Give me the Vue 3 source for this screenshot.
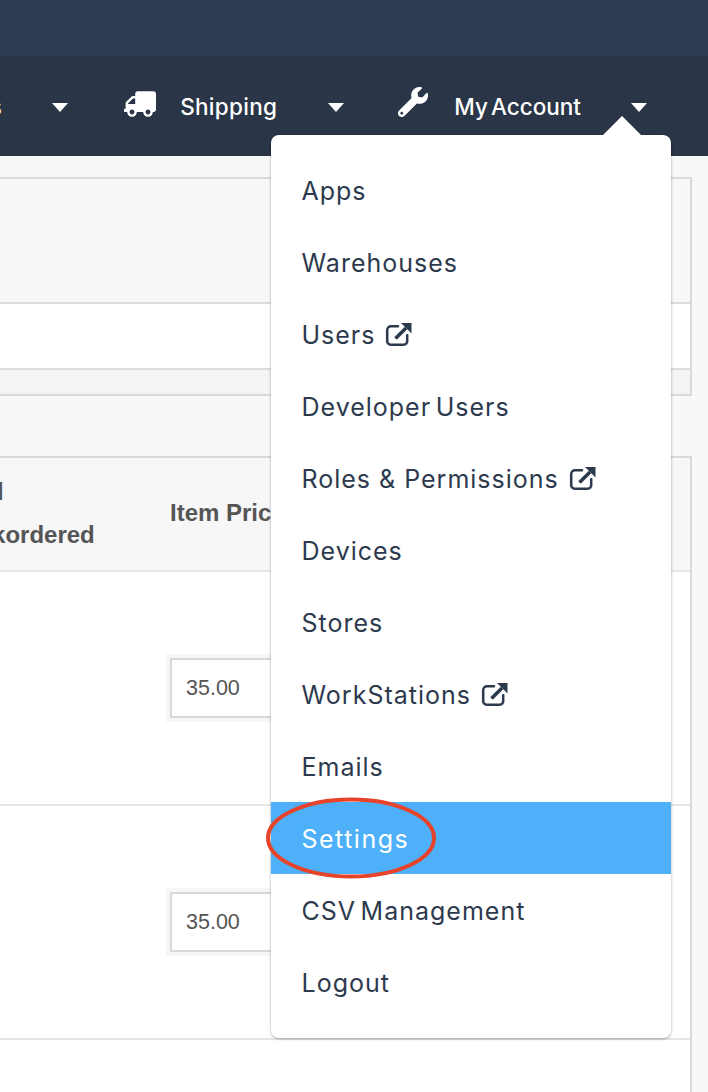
<script setup>
const items = [
  { label: 'Apps' },
  { label: 'Warehouses' },
  { label: 'Users', ext: true },
  { label: 'Developer Users' },
  { label: 'Roles & Permissions', ext: true, loose: true },
  { label: 'Devices' },
  { label: 'Stores' },
  { label: 'WorkStations', ext: true },
  { label: 'Emails' },
  { label: 'Settings', active: true },
  { label: 'CSV Management' },
  { label: 'Logout' }
]
const rows = ['35.00', '35.00']
</script>

<template>
  <div class="page">
    <header class="topbar">
      <nav class="nav">
        <a class="nav-item first"><span class="nav-label">Products</span><i class="caret"></i></a>
        <a class="nav-item ship">
          <svg class="truck" viewBox="0 0 640 512"><path transform="matrix(-1 0 0 1 640 0)" fill="#fff" d="M624 352h-16V243.9c0-12.7-5.1-24.9-14.1-33.9L494 110.1c-9-9-21.2-14.1-33.9-14.1H416V48c0-26.5-21.5-48-48-48H48C21.5 0 0 21.5 0 48v320c0 26.5 21.5 48 48 48h16c0 53 43 96 96 96s96-43 96-96h128c0 53 43 96 96 96s96-43 96-96h48c8.8 0 16-7.2 16-16v-32c0-8.8-7.2-16-16-16zM160 464c-26.5 0-48-21.5-48-48s21.5-48 48-48 48 21.5 48 48-21.5 48-48 48zm320 0c-26.5 0-48-21.5-48-48s21.5-48 48-48 48 21.5 48 48-21.5 48-48 48zm80-208H416V144h44.1l99.9 99.9V256z"/></svg>
          <span class="nav-label">Shipping</span><i class="caret"></i>
        </a>
        <a class="nav-item acct">
          <svg class="wrench" viewBox="0 0 512 512"><path fill="#fff" d="M507.73 109.1c-2.24-9.03-13.54-12.09-20.12-5.51l-74.36 74.36-67.88-11.31-11.31-67.88 74.36-74.36c6.62-6.62 3.43-17.9-5.66-20.16-47.38-11.74-99.55.91-136.58 37.93-39.64 39.64-50.55 97.1-34.05 147.2L18.74 402.76c-24.99 24.99-24.99 65.51 0 90.5 24.99 24.99 65.51 24.99 90.5 0l213.21-213.21c50.12 16.71 107.47 5.68 147.37-34.22 37.07-37.07 49.7-89.32 37.91-136.73zM64 472c-13.25 0-24-10.75-24-24 0-13.26 10.75-24 24-24s24 10.74 24 24c0 13.25-10.75 24-24 24z"/></svg>
          <span class="nav-label">My Account</span><i class="caret"></i>
        </a>
      </nav>
    </header>

    <main class="content">
      <section class="panel top-panel">
        <div class="panel-head"></div>
        <div class="panel-body"></div>
        <div class="panel-foot"></div>
      </section>

      <section class="panel table-panel">
        <div class="thead">
          <div class="th th-qty">Total<br />Backordered</div>
          <div class="th th-price">Item Price</div>
        </div>
        <div v-for="(price, i) in rows" :key="i" class="row">
          <div class="cell-qty"></div>
          <div class="cell-price"><span class="price-input">{{ price }}</span></div>
        </div>
        <div class="row"></div>
      </section>
    </main>

    <div class="menu">
      <i class="menu-arrow"></i>
      <a v-for="item in items" :key="item.label" class="menu-item" :class="{ active: item.active, loose: item.loose }">
        <span>{{ item.label }}</span>
        <svg v-if="item.ext" class="ext" viewBox="0 0 27 24">
          <path d="M13 4.300H6a3.800 3.800 0 0 0-3.800 3.800v11.100a3.500 3.500 0 0 0 3.500 3.500h13a3.500 3.500 0 0 0 3.500-3.500v-6" fill="none" stroke="#2d3a4e" stroke-width="2.500" stroke-linecap="round"/>
          <path d="M10.500 16.500L21 6" fill="none" stroke="#2d3a4e" stroke-width="3.600"/>
          <path d="M16 1H26.500V11.500Z" fill="#2d3a4e"/>
        </svg>
      </a>
      <svg class="circle" viewBox="0 0 172 84"><ellipse cx="85" cy="42" rx="83" ry="38.500" fill="none" stroke="#e6432a" stroke-width="4"/></svg>
    </div>
  </div>
</template>

<style scoped>
.page {
  position: relative;
  width: 708px;
  height: 1092px;
  overflow: hidden;
  background: #f8f8f8;
  font-family: Inter, "Liberation Sans", sans-serif;
}
.topbar {
  height: 156px;
  background: linear-gradient(#2f3b50 0, #2e3a4f 55px, #2a3547 57px);
  overflow: hidden;
}
.nav {
  height: 100%;
  box-sizing: border-box;
  padding: 88px 61px 0 0;
  display: flex;
  justify-content: flex-end;
  align-items: flex-start;
  color: #fff;
}
.nav-item {
  display: flex;
  align-items: center;
  height: 36px;
  flex: none;
}
.nav-label {
  font-size: 22.500px;
  font-weight: 500;
  letter-spacing: 0.3px;
  white-space: nowrap;
}
.acct .nav-label {
  letter-spacing: 0;
  word-spacing: -3px;
}
.caret {
  width: 0;
  height: 0;
  border-left: 8.500px solid transparent;
  border-right: 8.500px solid transparent;
  border-top: 9px solid #fff;
  margin-top: 3px;
}
.first .caret { margin-left: 50px; }
.ship { margin-left: 56px; }
.ship .caret { margin-left: 51px; }
.acct { margin-left: 54px; }
.acct .caret { margin-left: 50px; }
.truck { width: 32px; height: 26px; margin-right: 24px; margin-top: -4px; }
.wrench { width: 30px; height: 30px; margin-right: 26px; margin-top: -8px; }

.content {
  padding: 21px 16px 0 0;
}
.panel {
  margin-left: -60px;
  border: 2px solid #d9d9d9;
  background: #fff;
}
.top-panel { height: 215px; display: flex; flex-direction: column; }
.panel-head { height: 123px; background: #f8f8f8; border-bottom: 2px solid #dcdcdc; }
.panel-body { height: 64px; background: #fff; border-bottom: 2px solid #dcdcdc; }
.panel-foot { flex: 1; background: #f4f4f4; }
.table-panel { margin-top: 60px; }
.thead {
  height: 114px;
  box-sizing: border-box;
  padding-bottom: 3px;
  background: #f7f7f7;
  border-bottom: 2px solid #e5e5e5;
  display: flex;
  align-items: center;
  font-family: "Liberation Sans", Arial, sans-serif;
  color: #555;
  font-weight: 700;
  font-size: 24px;
}
.th { line-height: 43px; }
.th-qty { margin-left: 6px; width: 222px; flex: none; }
.th-price { white-space: nowrap; }
.row {
  height: 232px;
  background: #fff;
  border-bottom: 2px solid #e5e5e5;
  display: flex;
  align-items: center;
}
.cell-qty { margin-left: 6px; width: 222px; flex: none; }
.price-input {
  display: block;
  box-sizing: border-box;
  width: 130px;
  height: 60px;
  line-height: 56px;
  padding-left: 14px;
  border: 2px solid #d9d9d9;
  background: #fff;
  box-shadow: 0 0 0 4px #f6f6f6;
  color: #555;
  font-family: "Liberation Sans", Arial, sans-serif;
  font-size: 21.500px;
}

.menu {
  position: absolute;
  left: 271px;
  top: 135px;
  width: 400px;
  box-sizing: border-box;
  padding: 19px 0 20px;
  background: #fff;
  border-radius: 8px;
  box-shadow: 0 1px 3px rgba(0, 0, 0, 0.3), 0 0 2px rgba(0, 0, 0, 0.08);
}
.menu-arrow {
  position: absolute;
  left: 332px;
  top: -19px;
  width: 0;
  height: 0;
  border-left: 19px solid transparent;
  border-right: 19px solid transparent;
  border-bottom: 19px solid #fff;
}
.menu-item {
  display: flex;
  align-items: center;
  box-sizing: border-box;
  height: 72px;
  padding: 2px 0 0 30.500px;
  color: #2d3a4e;
  font-size: 25px;
  letter-spacing: 1px;
  word-spacing: -3.500px;
  white-space: nowrap;
}
.menu-item.loose {
  word-spacing: 0;
}
.menu-item.active {
  background: #4fb0fa;
  color: #fff;
  letter-spacing: 1.500px;
}
.ext { width: 27px; height: 24px; margin-left: 10px; margin-top: -3px; }
.circle {
  position: absolute;
  left: -5px;
  top: 661px;
  width: 172px;
  height: 84px;
}
</style>

<style>
html, body { background: #f8f8f8; }
</style>
